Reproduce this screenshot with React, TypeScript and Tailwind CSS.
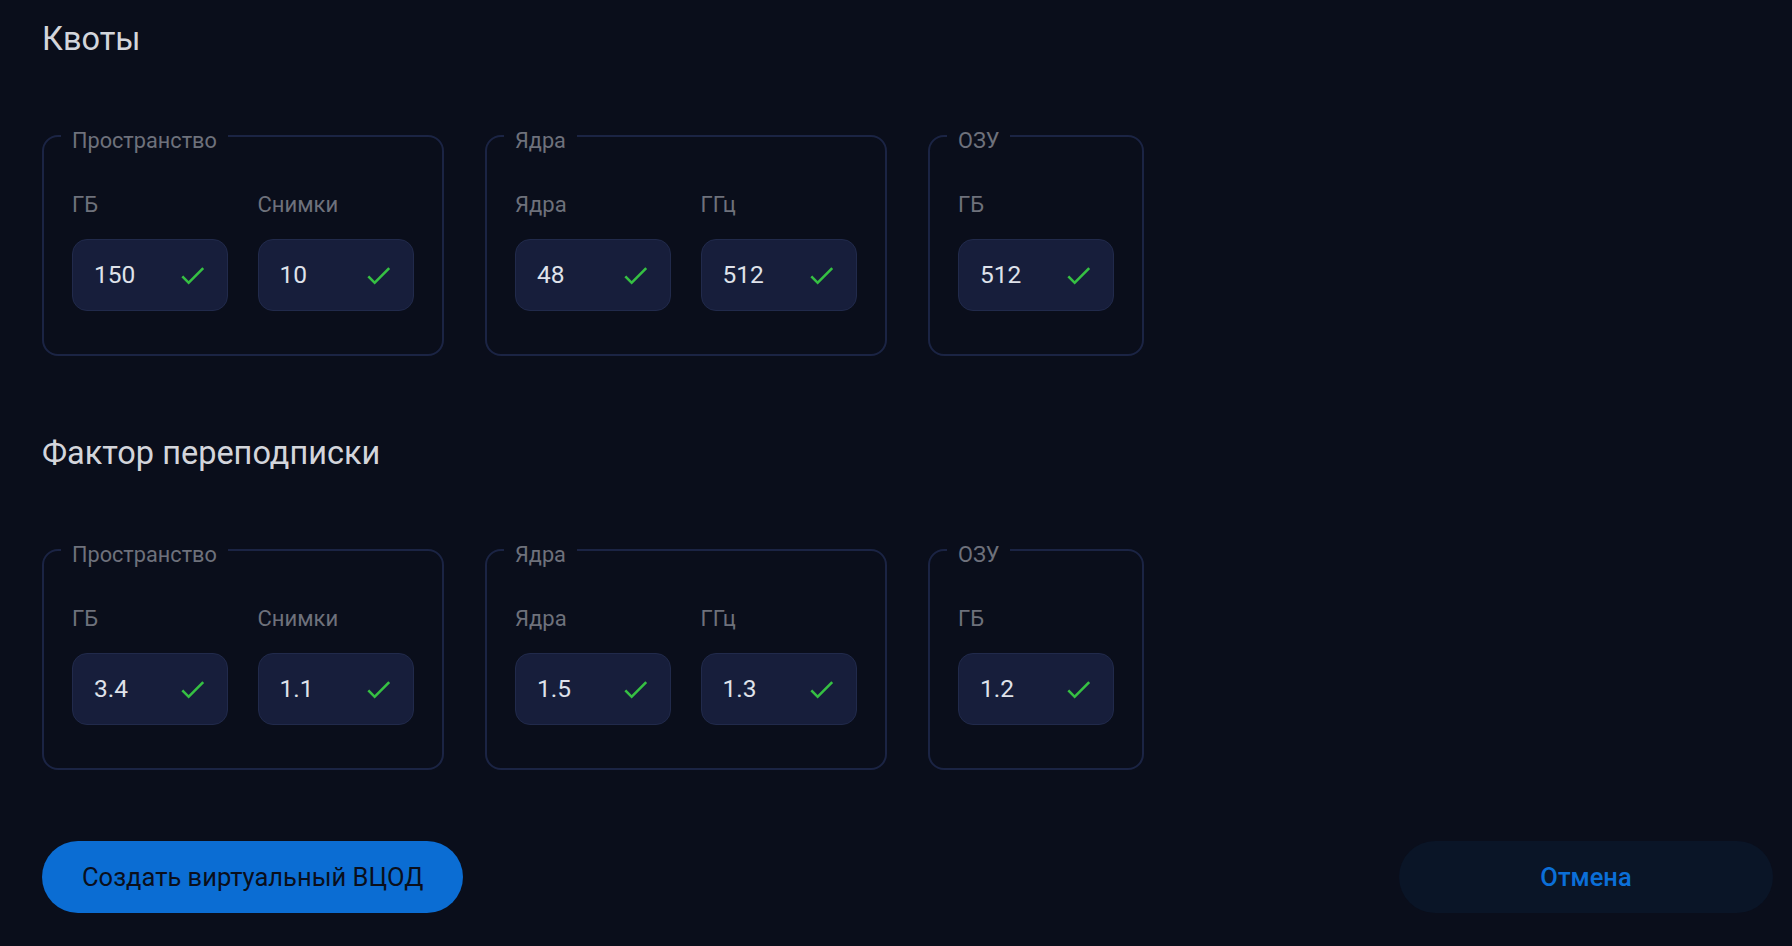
import { ReactNode } from "react";

type Field = { label: string; value: string };
type Group = { title: string; fields: Field[] };

const quotas: Group[] = [
  {
    title: "Пространство",
    fields: [
      { label: "ГБ", value: "150" },
      { label: "Снимки", value: "10" },
    ],
  },
  {
    title: "Ядра",
    fields: [
      { label: "Ядра", value: "48" },
      { label: "ГГц", value: "512" },
    ],
  },
  { title: "ОЗУ", fields: [{ label: "ГБ", value: "512" }] },
];

const overcommit: Group[] = [
  {
    title: "Пространство",
    fields: [
      { label: "ГБ", value: "3.4" },
      { label: "Снимки", value: "1.1" },
    ],
  },
  {
    title: "Ядра",
    fields: [
      { label: "Ядра", value: "1.5" },
      { label: "ГГц", value: "1.3" },
    ],
  },
  { title: "ОЗУ", fields: [{ label: "ГБ", value: "1.2" }] },
];

function CheckIcon() {
  return (
    <svg viewBox="0 0 24 24" className="size-[31px] shrink-0 fill-[#36c043]">
      <path d="M9 16.17 4.83 12l-1.42 1.41L9 19 21 7l-1.41-1.41z" />
    </svg>
  );
}

function ValueInput({ field }: { field: Field }) {
  return (
    <div className="flex flex-col gap-[20px]">
      <span className="text-[22px] leading-[28px] text-[#6e717b]">{field.label}</span>
      <div className="flex h-[72px] w-[156px] items-center justify-between rounded-[15px] border border-[#212a4b] bg-[#171e3b] pl-[21px] pr-[19px]">
        <span className="text-[24.5px] leading-[30px] text-[#dfe2ea]">{field.value}</span>
        <CheckIcon />
      </div>
    </div>
  );
}

function GroupBox({ group }: { group: Group }) {
  const two = group.fields.length > 1;
  return (
    <fieldset
      className={
        "rounded-[16px] border-2 border-[#1b2444] px-[28px] pb-[43px] pt-[36px] " +
        (two ? "w-[402px]" : "w-[216px]")
      }
    >
      <legend className="-ml-[11px] px-[11px] pt-[10px] text-[21.7px] leading-[28px] text-[#6e717b]">
        {group.title}
      </legend>
      <div className={two ? "grid grid-cols-2 gap-x-[29px]" : "flex"}>
        {group.fields.map((f) => (
          <ValueInput key={f.label} field={f} />
        ))}
      </div>
    </fieldset>
  );
}

function Section({ title, groups, className }: { title: string; groups: Group[]; className?: string }): ReactNode {
  return (
    <section className={className}>
      <h2 className="text-[32.5px] leading-[40px] text-[#d3d5db]">{title}</h2>
      <div className="mt-[58px] flex gap-[41px]">
        {groups.map((g) => (
          <GroupBox key={g.title} group={g} />
        ))}
      </div>
    </section>
  );
}

export default function App() {
  return (
    <div
      className="min-h-screen w-full bg-[#0a0e1b] pl-[42px] pr-[19px] pt-[19px]"
      style={{ fontFamily: "Roboto, 'Noto Sans', sans-serif" }}
    >
      <Section title="Квоты" groups={quotas} />
      <Section title="Фактор переподписки" groups={overcommit} className="mt-[77px]" />
      <div className="mt-[71px] flex items-center justify-between">
        <button
          type="button"
          className="h-[72px] rounded-full bg-[#0b6dd3] px-10 text-[25.5px] text-[#0a0f1c]"
        >
          Создать виртуальный ВЦОД
        </button>
        <button
          type="button"
          className="h-[72px] w-[374px] rounded-full bg-[#0a1527] text-[25.5px] font-medium text-[#0b6fd8]"
        >
          Отмена
        </button>
      </div>
    </div>
  );
}
